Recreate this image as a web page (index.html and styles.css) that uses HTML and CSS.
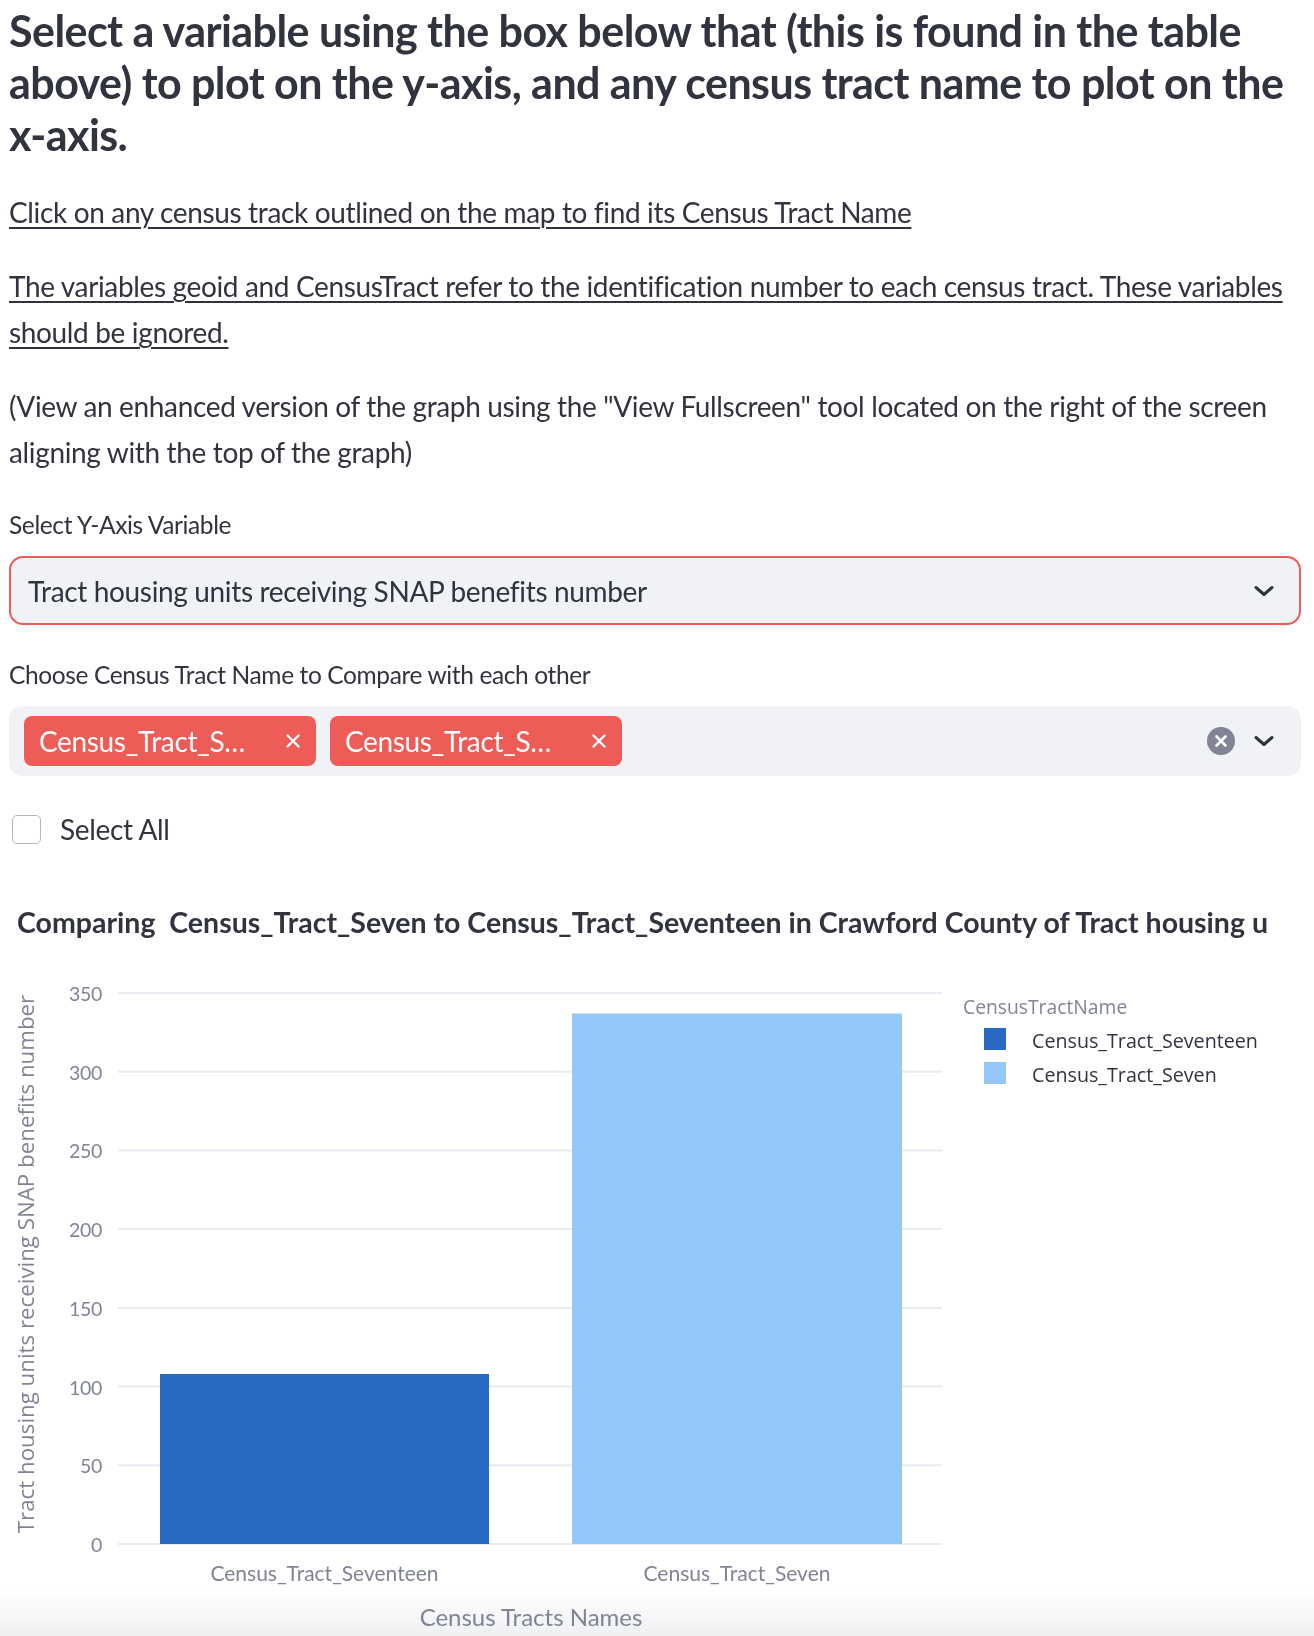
FILE: index.html
```html
<!DOCTYPE html>
<html lang="en">
<head>
<meta charset="utf-8">
<title>Census tract comparison</title>
<link rel="stylesheet" href="styles.css">
</head>
<body>
<main class="page">
  <h3 class="heading">Select a variable using the box below that (this is found in the table<br>above) to plot on the y-axis, and any census tract name to plot on the<br>x-axis.</h3>
  <p class="note"><u>Click on any census track outlined on the map to find its Census Tract Name</u></p>
  <p class="note"><u>The variables geoid and CensusTract refer to the identification number to each census tract. These variables<br>should be ignored.</u></p>
  <p class="note">(View an enhanced version of the graph using the "View Fullscreen" tool located on the right of the screen<br>aligning with the top of the graph)</p>

  <div class="field">
    <label class="field-label">Select Y-Axis Variable</label>
    <div class="select select-single">
      <span class="select-value">Tract housing units receiving SNAP benefits number</span>
      <svg class="chevron" viewBox="0 0 20 10" width="20" height="10"><path d="M2 1.5 L10 8.5 L18 1.5" fill="none" stroke="#31333F" stroke-width="3" stroke-linecap="round" stroke-linejoin="round"/></svg>
    </div>
  </div>

  <div class="field">
    <label class="field-label">Choose Census Tract Name to Compare with each other</label>
    <div class="select select-multi">
      <span class="tag"><span class="tag-text">Census_Tract_Seven</span><svg class="tag-x" viewBox="0 0 14 14" width="14" height="14"><path d="M1.5 1.5 L12.5 12.5 M12.5 1.5 L1.5 12.5" stroke="#fff" stroke-width="2.4" stroke-linecap="round"/></svg></span>
      <span class="tag"><span class="tag-text">Census_Tract_Seventeen</span><svg class="tag-x" viewBox="0 0 14 14" width="14" height="14"><path d="M1.5 1.5 L12.5 12.5 M12.5 1.5 L1.5 12.5" stroke="#fff" stroke-width="2.4" stroke-linecap="round"/></svg></span>
      <span class="spacer"></span>
      <svg class="clear" viewBox="0 0 28 28" width="28" height="28"><circle cx="14" cy="14" r="14" fill="#808495"/><path d="M9.5 9.5 L18.5 18.5 M18.5 9.5 L9.5 18.5" stroke="#fff" stroke-width="2.6" stroke-linecap="round"/></svg>
      <svg class="chevron" viewBox="0 0 20 10" width="20" height="10"><path d="M2 1.5 L10 8.5 L18 1.5" fill="none" stroke="#31333F" stroke-width="3" stroke-linecap="round" stroke-linejoin="round"/></svg>
    </div>
  </div>

  <label class="check-row"><span class="check-box"></span><span>Select All</span></label>

  <section class="chart">
    <div class="chart-title">Comparing  Census_Tract_Seven to Census_Tract_Seventeen in Crawford County of Tract housing units receiving SNAP benefits number</div>
    <svg class="plot" viewBox="9 0 1292 690" width="1292" height="690">
      <g class="grid">
        <line x1="118" x2="942" y1="48" y2="48"/>
        <line x1="118" x2="942" y1="126.7" y2="126.7"/>
        <line x1="118" x2="942" y1="205.4" y2="205.4"/>
        <line x1="118" x2="942" y1="284.1" y2="284.1"/>
        <line x1="118" x2="942" y1="362.9" y2="362.9"/>
        <line x1="118" x2="942" y1="441.6" y2="441.6"/>
        <line x1="118" x2="942" y1="520.3" y2="520.3"/>
        <line x1="118" x2="942" y1="599" y2="599"/>
      </g>
      <g class="ticks-y">
        <text x="102" y="56">350</text>
        <text x="102" y="134.7">300</text>
        <text x="102" y="213.4">250</text>
        <text x="102" y="292.1">200</text>
        <text x="102" y="370.9">150</text>
        <text x="102" y="449.6">100</text>
        <text x="102" y="528.3">50</text>
        <text x="102" y="607">0</text>
      </g>
      <rect x="160" y="429" width="329" height="170" fill="#2869C3"/>
      <rect x="572" y="68.5" width="330" height="530.5" fill="#94C8F8"/>
      <g class="ticks-x">
        <text x="324.5" y="636">Census_Tract_Seventeen</text>
        <text x="737" y="636">Census_Tract_Seven</text>
      </g>
      <text class="axis-title-x" x="531" y="681">Census Tracts Names</text>
      <text class="axis-title-y" transform="translate(34 319) rotate(-90)">Tract housing units receiving SNAP benefits number</text>
      <text class="legend-title" x="963" y="69">CensusTractName</text>
      <rect x="984" y="83" width="22" height="22" fill="#2869C3"/>
      <rect x="984" y="117" width="22" height="22" fill="#94C8F8"/>
      <text class="legend-item" x="1032" y="103">Census_Tract_Seventeen</text>
      <text class="legend-item" x="1032" y="137">Census_Tract_Seven</text>
    </svg>
  </section>
</main>
<div class="bottom-fade"></div>
</body>
</html>
```

FILE: styles.css
```css
* { box-sizing: border-box; }
html, body { margin: 0; padding: 0; }
html { background: #fff; }
body {
  font-family: Lato, "Liberation Sans", sans-serif;
  color: #31333F;
  overflow: hidden;
}
.page {
  display: flex;
  flex-direction: column;
  padding: 5px 13px 0 9px;
}
.heading {
  margin: 0;
  font-size: 43px;
  line-height: 52px;
  font-weight: 700;
  letter-spacing: -0.55px;
  white-space: nowrap;
}
.note {
  margin: 28px 0 0;
  font-size: 28px;
  line-height: 46px;
  letter-spacing: -0.35px;
  white-space: nowrap;
}
.note u {
  text-decoration-thickness: 2px;
  text-underline-offset: 4px;
}
.field {
  margin-top: 30px;
  display: flex;
  flex-direction: column;
}
.field-label {
  font-size: 24.5px;
  line-height: 40px;
  letter-spacing: -0.38px;
  margin-bottom: 11px;
}
.select {
  height: 70px;
  background: #F0F2F6;
  border-radius: 14px;
  display: flex;
  align-items: center;
}
.select-single {
  height: 69px;
  border: 2px solid #EE5C57;
  padding: 0 25px 0 17px;
  justify-content: space-between;
  font-size: 28px;
  letter-spacing: -0.35px;
}
.select-multi {
  padding: 0 27px 0 15px;
  gap: 14px;
}
.tag {
  display: flex;
  align-items: center;
  width: 292px;
  height: 50px;
  border-radius: 8px;
  background: #EE5C57;
  color: #fff;
  font-size: 28px;
  letter-spacing: -0.35px;
  padding: 0 16px 0 15px;
}
.tag-text {
  max-width: 220px;
  overflow: hidden;
  text-overflow: ellipsis;
  white-space: nowrap;
}
.tag-x {
  margin-left: auto;
  flex: none;
}
.spacer { flex: 1; }
.clear { margin-right: 5px; flex: none; }
.chevron { flex: none; }
.check-row {
  margin-top: 30px;
  height: 46px;
  display: flex;
  align-items: center;
  gap: 19px;
  font-size: 28px;
  letter-spacing: -0.35px;
}
.check-box {
  width: 29px;
  height: 29px;
  margin-left: 3px;
  border: 1.5px solid #B4B6BE;
  border-radius: 5px;
  background: #fff;
}
.chart {
  margin-top: 29px;
  display: flex;
  flex-direction: column;
}
.chart-title {
  margin: 18px 0 0 8px;
  width: 1251px;
  height: 46px;
  line-height: 46px;
  font-size: 28.5px;
  font-weight: 700;
  white-space: pre;
  overflow: hidden;
}
.plot { display: block; }
.plot .grid line { stroke: #E6EAF1; stroke-width: 2; }
.plot text { font-family: Lato, "Liberation Sans", sans-serif; }
.ticks-y text { font-size: 19.5px; letter-spacing: -0.3px; fill: #808495; text-anchor: end; }
.ticks-x text { font-size: 21px; fill: #808495; text-anchor: middle; }
.axis-title-x { font-size: 24px; fill: #808495; text-anchor: middle; }
.plot .axis-title-y { font-family: "Open Sans", sans-serif; font-size: 22.3px; fill: #808495; text-anchor: middle; }
.plot .legend-title { font-family: "Open Sans", sans-serif; font-size: 19.3px; fill: #808495; }
.plot .legend-item { font-family: "Open Sans", sans-serif; font-size: 19.7px; fill: #31333F; }
.bottom-fade {
  position: fixed;
  z-index: -1;
  left: 0;
  right: 0;
  bottom: 0;
  height: 46px;
  background: linear-gradient(rgba(240, 241, 243, 0), #EFF0F2);
  pointer-events: none;
}
```
